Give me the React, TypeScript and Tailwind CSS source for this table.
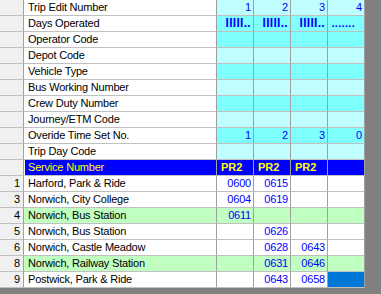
import React from "react";

type HeaderRow = {
  label: string;
  bright: boolean;
  vals?: string[];
  days?: boolean;
};

const headerRows: HeaderRow[] = [
  { label: "Trip Edit Number", bright: false, vals: ["1", "2", "3", "4"] },
  { label: "Days Operated", bright: true, days: true },
  { label: "Operator Code", bright: true },
  { label: "Depot Code", bright: false },
  { label: "Vehicle Type", bright: true },
  { label: "Bus Working Number", bright: false },
  { label: "Crew Duty Number", bright: true },
  { label: "Journey/ETM Code", bright: false },
  { label: "Overide Time Set No.", bright: true, vals: ["1", "2", "3", "0"] },
  { label: "Trip Day Code", bright: false },
];

type StopRow = { n: string; name: string; green?: boolean; times: string[] };

const stops: StopRow[] = [
  { n: "1", name: "Harford, Park & Ride", times: ["0600", "0615", "", ""] },
  { n: "3", name: "Norwich, City College", times: ["0604", "0619", "", ""] },
  { n: "4", name: "Norwich, Bus Station", green: true, times: ["0611", "", "", ""] },
  { n: "5", name: "Norwich, Bus Station", times: ["", "0626", "", ""] },
  { n: "6", name: "Norwich, Castle Meadow", times: ["", "0628", "0643", ""] },
  { n: "8", name: "Norwich, Railway Station", green: true, times: ["", "0631", "0646", ""] },
  { n: "9", name: "Postwick, Park & Ride", times: ["", "0643", "0658", ""] },
];

const cell = "h-[16px] border-r border-b border-r-[#a0a0a0] border-b-[#c0c0c0] overflow-hidden whitespace-nowrap leading-[15px]";
const idxCell = `${cell} bg-[#f0f0f0] text-right pr-[3px]`;

export default function App() {
  return (
    <div
      className="w-[381px] h-[294px] bg-[#808080] overflow-hidden text-[11px] tracking-[-0.2px] text-black"
      style={{ fontFamily: '"Liberation Sans", Arial, sans-serif' }}
    >
      <div className="grid w-[365px] grid-cols-[24px_193px_37px_37px_37px_37px] bg-white">
        {headerRows.map((r) => (
          <React.Fragment key={r.label}>
            <div className={idxCell} />
            <div className={`${cell} bg-white pl-[4px]`}>{r.label}</div>
            {[0, 1, 2, 3].map((c) => (
              <div
                key={c}
                className={`${cell} ${r.bright ? "bg-[#80ffff]" : "bg-[#c0ffff]"} text-right text-[#0000ff] ${
                  r.days
                    ? c === 3
                      ? "pr-[9px] font-bold text-[11px] tracking-[0.3px]"
                      : "pr-[2px] font-bold text-[12px] tracking-[0.3px]"
                    : "pr-[2px]"
                }`}
              >
                {r.vals ? r.vals[c] : r.days ? (c === 3 ? "......." : "IIIII..") : ""}
              </div>
            ))}
          </React.Fragment>
        ))}

        {/* service number row */}
        <div className={idxCell} />
        <div className={`${cell} bg-[#0000ff] border-l border-l-white pl-[3px] text-[#ffff00]`}>Service Number</div>
        {["PR2", "PR2", "PR2", ""].map((s, c) => (
          <div key={c} className={`${cell} bg-[#0000ff] pl-[4px] font-bold text-[#ffff00] tracking-[0px]`}>
            {s}
          </div>
        ))}

        {stops.map((r, i) => {
          const bg = r.green ? "bg-[#c0ffc0]" : "bg-white";
          return (
            <React.Fragment key={i}>
              <div className={idxCell}>{r.n}</div>
              <div className={`${cell} ${bg} pl-[4px]`}>{r.name}</div>
              {r.times.map((t, c) => {
                const selected = i === stops.length - 1 && c === 3;
                return (
                  <div
                    key={c}
                    className={`${cell} ${selected ? "bg-[#0078d7]" : bg} text-right pr-[2px] text-[#0000ff]`}
                  >
                    {t}
                  </div>
                );
              })}
            </React.Fragment>
          );
        })}
      </div>
    </div>
  );
}
